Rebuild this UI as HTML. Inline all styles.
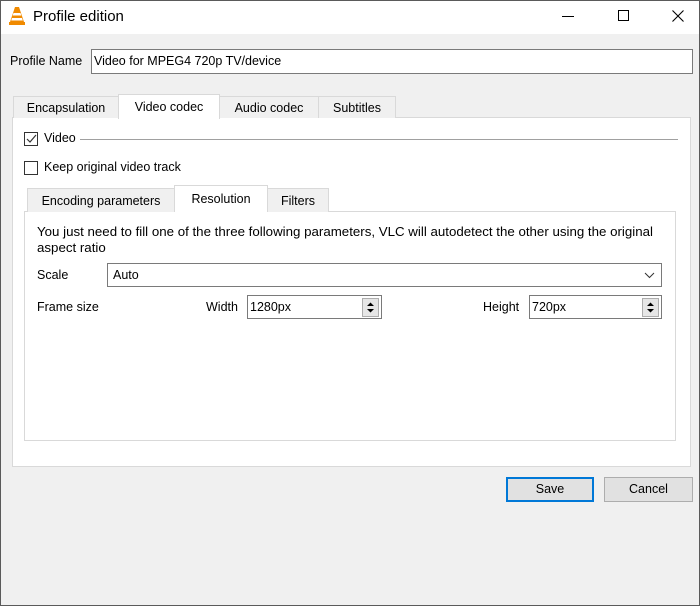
<!DOCTYPE html>
<html><head><style>
*{box-sizing:border-box;margin:0;padding:0}
body{width:700px;height:606px;background:#f0f0f0;font-family:"Liberation Sans",sans-serif;font-size:12.5px;color:#000;position:relative;overflow:hidden}
.a{position:absolute}
.win{left:0;top:0;width:700px;height:606px;border:1px solid #5a5a5a}
.tb{left:1px;top:1px;width:698px;height:33px;background:#fff}
.inp{background:#fff;border:1px solid #7a7a7a}
.tab{background:#f0f0f0;border:1px solid #d9d9d9;border-bottom:none;text-align:center;line-height:22px}
.sel{background:#fff;border:1px solid #d9d9d9;border-bottom:none;z-index:2;text-align:center}
.cb{width:14px;height:14px;border:1px solid #333;background:#fff}
.spin{width:17px;height:19px;top:2px;right:2px;background:#e6e6e6;border:1px solid #adadad}
.btn{background:#e1e1e1;border:1px solid #adadad;text-align:center;line-height:23px}
</style></head><body>
<div class="a win"></div>
<div class="a tb"></div>
<svg class="a" style="left:8px;top:6px" width="18" height="20" viewBox="0 0 18 20"><path d="M7 1h4l5 15H2z" fill="#f08a00"/><path d="M5.5 7h7l.8 2.5H4.7zM4 12h10l.8 2.5H3.2z" fill="#fff"/><rect x="1" y="16" width="16" height="3" fill="#f08a00"/></svg>
<div class="a" style="left:33px;top:8px;font-size:15px">Profile edition</div>
<div class="a" style="left:562px;top:16px;width:12px;height:1px;background:#000"></div>
<div class="a" style="left:618px;top:10px;width:11px;height:11px;border:1px solid #000"></div>
<svg class="a" style="left:672px;top:10px" width="12" height="12"><path d="M0.5 0.5l11 11M11.5 0.5l-11 11" stroke="#000" stroke-width="1.1"/></svg>

<div class="a" style="left:10px;top:54px">Profile Name</div>
<div class="a inp" style="left:91px;top:49px;width:602px;height:25px;padding:4px 2px">Video for MPEG4 720p TV/device</div>

<div class="a" style="left:12px;top:117px;width:679px;height:350px;background:#fff;border:1px solid #d9d9d9"></div>
<div class="a tab" style="left:13px;top:96px;width:106px;height:22px">Encapsulation</div>
<div class="a sel" style="left:118px;top:94px;width:102px;height:25px;line-height:24px">Video codec</div>
<div class="a tab" style="left:219px;top:96px;width:100px;height:22px">Audio codec</div>
<div class="a tab" style="left:318px;top:96px;width:78px;height:22px">Subtitles</div>

<div class="a cb" style="left:24px;top:132px"></div>
<svg class="a" style="left:24px;top:132px" width="14" height="14"><path d="M3 7l3 3 6-7" stroke="#333" stroke-width="1.2" fill="none"/></svg>
<div class="a" style="left:44px;top:131px">Video</div>
<div class="a" style="left:80px;top:139px;width:598px;height:1px;background:#a0a0a0"></div>
<div class="a cb" style="left:24px;top:161px"></div>
<div class="a" style="left:44px;top:160px">Keep original video track</div>

<div class="a" style="left:24px;top:211px;width:652px;height:230px;background:#fff;border:1px solid #d9d9d9"></div>
<div class="a tab" style="left:27px;top:188px;width:148px;height:24px;line-height:24px">Encoding parameters</div>
<div class="a sel" style="left:174px;top:185px;width:94px;height:27px;line-height:26px">Resolution</div>
<div class="a tab" style="left:267px;top:188px;width:62px;height:24px;line-height:24px">Filters</div>

<div class="a" style="left:37px;top:224px;line-height:16px;font-size:13.3px;white-space:nowrap">You just need to fill one of the three following parameters, VLC will autodetect the other using the original<br>aspect ratio</div>
<div class="a" style="left:37px;top:268px">Scale</div>
<div class="a inp" style="left:107px;top:263px;width:555px;height:24px;padding:4px 5px">Auto<svg class="a" style="right:6px;top:8px" width="11" height="7"><path d="M1 1l4.5 4.5L10 1" stroke="#333" fill="none"/></svg></div>
<div class="a" style="left:37px;top:300px">Frame size</div>
<div class="a" style="left:206px;top:300px">Width</div>
<div class="a inp" style="left:247px;top:295px;width:135px;height:24px;padding:4px 2px">1280px<div class="a spin"><svg width="15" height="17"><path d="M4 7l3.5-3.5L11 7zM4 10l3.5 3.5L11 10z" fill="#000"/></svg></div></div>
<div class="a" style="left:483px;top:300px">Height</div>
<div class="a inp" style="left:529px;top:295px;width:133px;height:24px;padding:4px 2px">720px<div class="a spin"><svg width="15" height="17"><path d="M4 7l3.5-3.5L11 7zM4 10l3.5 3.5L11 10z" fill="#000"/></svg></div></div>

<div class="a btn" style="left:506px;top:477px;width:88px;height:25px;border:2px solid #0078d7;line-height:21px">Save</div>
<div class="a btn" style="left:604px;top:477px;width:89px;height:25px">Cancel</div>
</body></html>
